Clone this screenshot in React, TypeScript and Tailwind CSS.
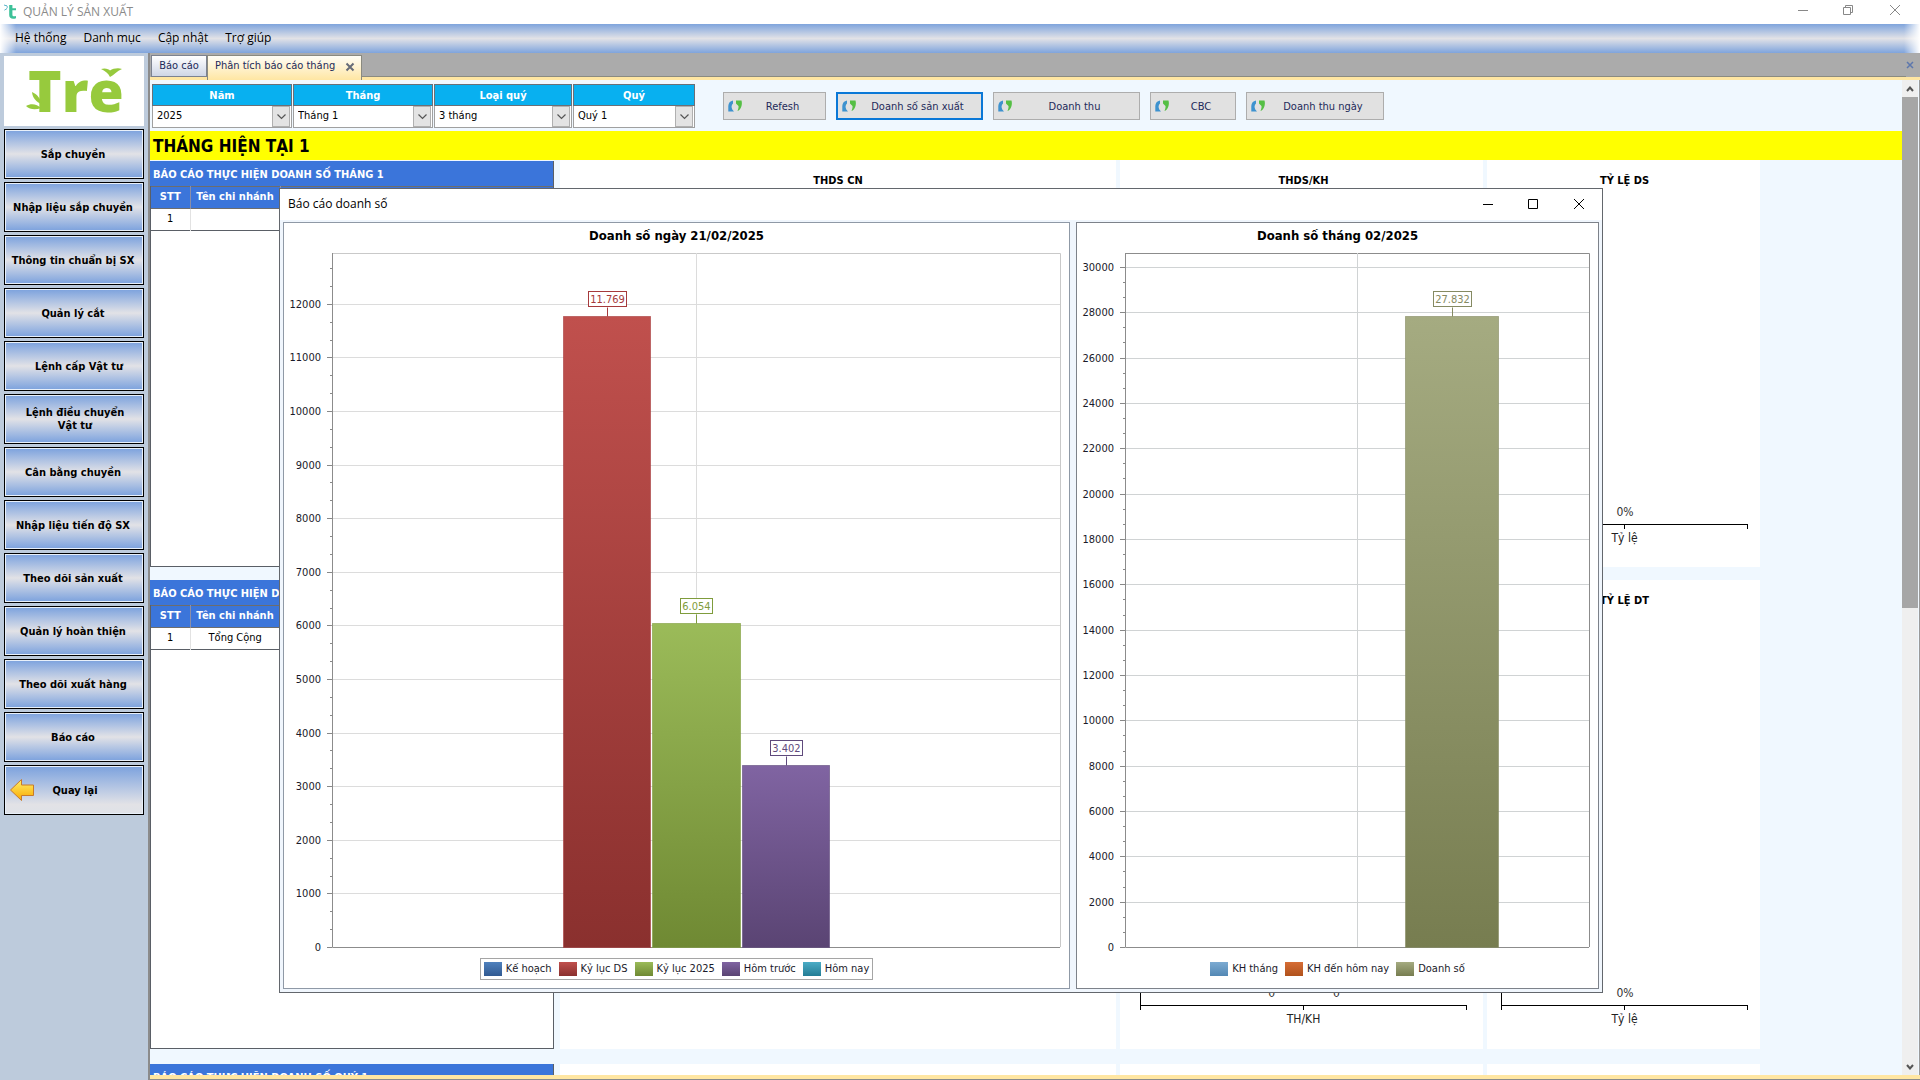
import React from "react";

const UI = "font-['DejaVu_Sans_Condensed','DejaVu_Sans',sans-serif]";
const SEGOE = "font-['Open_Sans','Noto_Sans',sans-serif]";

function TitleBar() {
  return (
    <header className={`flex h-6 shrink-0 items-center bg-white text-xs text-[#8a8a8a] ${SEGOE}`}>
      <svg className="ml-1 mr-1 h-4 w-[15px]" viewBox="0 0 15 16" aria-hidden="true">
        <path d="M0 1l2.5 0.8M0.4 6.2l2.6-1.6M2.2 1.4c1.4 0.6 1.4 2 0.6 3" stroke="#5bb5c9" strokeWidth="1" fill="none" />
        <path d="M5.2 1h3.2v3.2h3.6v2H8.4v4.6c0 1.6 1.6 1.9 3.6 1.2v2.2c-3.6 1.2-6.8 0.4-6.8-3.2z" fill="#3cc198" />
      </svg>
      <h1 className="pb-px">QUẢN LÝ SẢN XUẤT</h1>
      <div className="ml-auto flex items-center pb-1">
        <button aria-label="Thu nhỏ" className="flex w-[46px] justify-center">
          <svg width="10" height="10"><path d="M0 5.5h10" stroke="#888" /></svg>
        </button>
        <button aria-label="Khôi phục" className="flex w-11 justify-center">
          <svg width="10" height="10"><path d="M.5 2.5h7v7h-7zM2.500 2.500V.5h7v7h-2" stroke="#888" fill="none" /></svg>
        </button>
        <button aria-label="Đóng" className="flex w-[50px] justify-center">
          <svg width="10" height="10"><path d="M0 0l10 10M10 0L0 10" stroke="#888" fill="none" /></svg>
        </button>
      </div>
    </header>
  );
}

function MenuBar() {
  return (
    <nav className={`relative flex h-[29px] shrink-0 items-center gap-[17px] bg-linear-to-b from-[#7fa4dc] via-[#e2e2e6] to-[#7fa4dc] pb-0.5 pl-[15px] text-xs text-black ${SEGOE}`}>
      <div className="absolute inset-y-0 left-0 w-4 bg-linear-to-r from-white to-white/0" />
      <div className="absolute inset-y-0 right-0 w-4 bg-linear-to-l from-white to-white/0" />
      {["Hệ thống", "Danh mục", "Cập nhật", "Trợ giúp"].map((m) => (
        <button key={m} className="relative">{m}</button>
      ))}
    </nav>
  );
}

function Logo() {
  return (
    <div className="h-[70px] bg-white">
      <svg className="overflow-visible" width="140" height="70" viewBox="0 0 140 70" role="img" aria-label="Tre">
        <g fill="#97ca3d">
          <text x="24" y="56" fontSize="57" fontWeight="800" fontFamily="Open Sans, sans-serif">Tre</text>
          <path d="M97 13c4-1.400 8 0 9 1.600c3-2 8-3 12-1.600c-5 2-8 6-12 8c-2-4-5-6-9-8z" />
          <path d="M28 36c5 2 9 7 9.500 12c-5-2-9-6-9.500-12zM22 50c5-3 11-2 15 2c-5 2-11 2-15-2z" />
        </g>
      </svg>
    </div>
  );
}

function BackArrow() {
  return (
    <svg className="absolute left-1 top-3" width="26" height="24" viewBox="0 0 26 24" aria-hidden="true">
      <defs>
        <linearGradient id="arrow" x1="0" y1="0" x2="0" y2="1">
          <stop offset="0" stopColor="#fff06a" />
          <stop offset="1" stopColor="#f9a800" />
        </linearGradient>
      </defs>
      <path d="M1.500 12L12.500 1.500V7H24.500V17.500H12.500V22.500z" fill="url(#arrow)" stroke="#c87a2a" strokeLinejoin="round" />
    </svg>
  );
}

const sideItems: { label: React.ReactNode; pad?: string }[] = [
  { label: "Sắp chuyền" },
  { label: "Nhập liệu sắp chuyền" },
  { label: "Thông tin chuẩn bị SX" },
  { label: "Quản lý cắt" },
  { label: "Lệnh cấp Vật tư", pad: "pl-3" },
  { label: <>Lệnh điều chuyển<br />Vật tư</>, pad: "pl-1" },
  { label: "Cân bằng chuyền" },
  { label: "Nhập liệu tiến độ SX" },
  { label: "Theo dõi sản xuất" },
  { label: "Quản lý hoàn thiện" },
  { label: "Theo dõi xuất hàng" },
  { label: "Báo cáo" },
];

function Sidebar() {
  const base = "relative h-[50px] w-full whitespace-nowrap border border-black pr-0.5 text-center text-[11px] leading-[13px] font-bold text-black shadow-[inset_0_0_0_1px_#e8f0fa]";
  return (
    <aside className="flex w-[148px] shrink-0 flex-col gap-[3px] bg-[#bdcbdc] pl-1 pr-1 pt-[3px]">
      <Logo />
      {sideItems.map((s, i) => (
        <button key={i} className={`${base} bg-linear-to-b from-[#7ba1dd] via-[#e2e2e6] to-[#7ba1dd] ${s.pad ?? ""}`}>
          {s.label}
        </button>
      ))}
      <button className={`${base} bg-linear-to-b from-[#7ba1dd] via-[#e2e2e6] via-80% to-[#dfe2e8] pl-1`}>
        <BackArrow />
        Quay lại
      </button>
    </aside>
  );
}

function Tabs() {
  return (
    <div className="flex h-[27px] shrink-0 items-start border-b-[3px] border-[#ffe6a2] bg-[#ababab] pl-px text-[11px] text-[#1e2a5a]">
      <button className="mt-0.5 h-[22px] w-14 border border-[#7c8290] bg-linear-to-b from-white to-[#cfd6e6]">Báo cáo</button>
      <div className="mt-0.5 flex h-[25px] w-[155px] items-center justify-between border-x border-t border-[#8a8a80] bg-linear-to-b from-[#fffdf6] to-[#ffe6a2] pb-[3px] pl-[7px] pr-1.5">
        <button>Phân tích báo cáo tháng</button>
        <button aria-label="Đóng thẻ">
          <svg width="10" height="10"><path d="M1.500 1.500l7 7M8.500 1.500l-7 7" stroke="#666b78" strokeWidth="2" /></svg>
        </button>
      </div>
      <div className="h-6 flex-1 border-b border-[#8b8b80]" />
      <button aria-label="Đóng tất cả" className="mr-1.5 mt-2">
        <svg width="8" height="8"><path d="M1 1l6 6M7 1L1 7" stroke="#5d77ad" strokeWidth="1.500" /></svg>
      </button>
    </div>
  );
}

const filters = [
  { id: "nam", label: "Năm", value: "2025", w: "w-[141px]" },
  { id: "thang", label: "Tháng", value: "Tháng 1", w: "w-[141px]" },
  { id: "loai", label: "Loại quý", value: "3 tháng", w: "w-[139px]" },
  { id: "quy", label: "Quý", value: "Quý 1", w: "w-[123px]" },
];

const actions = [
  { label: "Refesh", w: "w-[103px]" },
  { label: "Doanh số sản xuất", w: "w-[147px]", active: true },
  { label: "Doanh thu", w: "w-[147px]" },
  { label: "CBC", w: "w-[86px]" },
  { label: "Doanh thu ngày", w: "w-[138px]" },
];

function Toolbar() {
  return (
    <div className="flex h-[51px] shrink-0 items-start pl-0.5 pt-1">
      {filters.map((f) => (
        <div key={f.id} className={`${f.w} pr-px`}>
          <label htmlFor={f.id} className="flex h-[22px] items-center justify-center border border-[#6b6f76] bg-[#08b0f0] pt-[3px] text-[11px] font-bold text-white">
            {f.label}
          </label>
          <div className="relative h-[22px] border-x border-b border-[#a0a0a0] bg-white pr-px">
            <select id={f.id} defaultValue={f.value} className="block h-5 w-full appearance-none pl-1 text-[11px] leading-5 text-black">
              <option>{f.value}</option>
            </select>
            <span className="pointer-events-none absolute right-px top-0 flex h-[21px] w-[18px] items-center justify-center border border-[#b0b0b0] bg-[#e3e3e3]">
              <svg width="9" height="6"><path d="M.5 .5l4 4l4-4" stroke="#555" fill="none" strokeWidth="1.200" /></svg>
            </span>
          </div>
        </div>
      ))}
      <div className="ml-[27px] mt-2 flex gap-2.5">
        {actions.map((a) => (
          <button
            key={a.label}
            className={`relative h-7 ${a.w} bg-[#e1e1e1] pl-4 pt-0.5 text-[11px] text-[#1e2a5a] ${a.active ? "border-2 border-[#0a78d7]" : "border border-[#adadad]"}`}
          >
            <svg className="absolute left-1 top-1/2 -translate-y-1/2" width="15" height="12" viewBox="0 0 15 12" aria-hidden="true">
              <path d="M5 .5C2 1 .5 3 .3 6v5.500H6L4.300 9.500C3.200 7 3.300 5 5 3.500z" fill="#3d92cf" />
              <path d="M8 .5h5.500c.5 2 .5 3.500 0 5.500c-.8 3-2.500 4.500-4 5c.8-2 1.200-3.500 1-5L8 3.500z" fill="#55bf45" />
            </svg>
            {a.label}
          </button>
        ))}
      </div>
    </div>
  );
}

function ReportTable({ title, rows }: { title: string; rows: string[][] }) {
  return (
    <section className="mr-0.5 flex flex-col overflow-hidden border-b border-r border-[#5a5f66] bg-white">
      <h3 className="flex h-[25px] shrink-0 items-center bg-[#3b75da] pl-[3px] pt-[3px] text-[11px] font-bold whitespace-nowrap text-white">{title}</h3>
      <div className="flex-1 border-l border-[#5a5f66]">
        <table className="w-full table-fixed border-collapse text-center text-[11px]">
          <colgroup>
            <col className="w-[39px]" />
            <col className="w-[90px]" />
            <col />
          </colgroup>
          <thead>
            <tr className="h-[22px] border-y border-[#6d6d6d] bg-[#3b75da] text-white">
              <th className="border-r border-[#8a8fa8]">STT</th>
              <th className="border-r border-[#8a8fa8]">Tên chi nhánh</th>
              <th />
            </tr>
          </thead>
          <tbody>
            {rows.map((r, i) => (
              <tr key={i} className="h-[22px] border-b border-[#5a5f66]">
                <td className="border-r border-[#e2e2e2]">{r[0]}</td>
                <td>{r[1]}</td>
                <td />
              </tr>
            ))}
          </tbody>
        </table>
      </div>
    </section>
  );
}

function ChartCard({ title, children, pad = "" }: { title: string; children?: React.ReactNode; pad?: string }) {
  return (
    <section className={`flex flex-col bg-white ${pad}`}>
      <h3 className="pt-[13px] text-center text-[11px] leading-4 font-bold text-black">{title}</h3>
      {children}
    </section>
  );
}

function MiniChart({ name, values, foot }: { name: string; values: string[]; foot: string }) {
  return (
    <>
      <div className="mt-2 flex flex-1 items-end justify-center gap-[58px] border-b border-l border-black pb-1 text-xs leading-4 text-[#333]">
        {values.map((v, i) => (
          <span key={i}>{v}</span>
        ))}
      </div>
      <div className={`flex flex-col items-center ${foot}`}>
        <div className="flex w-full justify-between">
          <span className="h-1 w-px bg-black" />
          <span className="h-1 w-px bg-black" />
          <span className="h-1 w-px bg-black" />
        </div>
        <span className="text-xs leading-[18px] text-[#222]">{name}</span>
      </div>
    </>
  );
}

function Dashboard() {
  const row = "grid shrink-0 grid-cols-[406px_556px_363px_273px] gap-x-1";
  return (
    <>
      <h2 className="flex h-[29px] shrink-0 items-center bg-[#ffff00] pl-[3px] pt-0.5 text-[17px] font-bold text-black">THÁNG HIỆN TẠI 1</h2>
      <div className={`${row} h-[407px]`}>
        <div className="grid pt-px">
          <ReportTable title="BÁO CÁO THỰC HIỆN DOANH SỐ THÁNG 1" rows={[["1", ""]]} />
        </div>
        <ChartCard title="THDS CN" />
        <ChartCard title="THDS/KH" pad="pl-5 pr-4">
          <MiniChart name="TH/KH" values={["0", "0"]} foot="h-[42px]" />
        </ChartCard>
        <ChartCard title="TỶ LỆ DS" pad="pl-3.5 pr-3">
          <MiniChart name="Tỷ lệ" values={["0%"]} foot="h-[42px]" />
        </ChartCard>
      </div>
      <div className={`${row} mt-[13px] h-[469px]`}>
        <ReportTable title="BÁO CÁO THỰC HIỆN DOANH THU THÁNG 1" rows={[["1", "Tổng Cộng"]]} />
        <ChartCard title="THDT CN" />
        <ChartCard title="THDT/KH" pad="pl-5 pr-4">
          <MiniChart name="TH/KH" values={["0", "0"]} foot="h-[43px]" />
        </ChartCard>
        <ChartCard title="TỶ LỆ DT" pad="pl-3.5 pr-3">
          <MiniChart name="Tỷ lệ" values={["0%"]} foot="h-[43px]" />
        </ChartCard>
      </div>
      <div className={`${row} mt-[15px] h-[407px]`}>
        <ReportTable title="BÁO CÁO THỰC HIỆN DOANH SỐ QUÝ 1" rows={[]} />
        <div className="bg-white" />
        <div className="bg-white" />
        <div className="bg-white" />
      </div>
    </>
  );
}

type Bar = { x: number; w: number; value: number; label: string; from: string; to: string; line: string };

type ChartProps = {
  id: string;
  title: string;
  width: number;
  left: number;
  right: number;
  mid: number;
  unit: number;
  step: number;
  max: number;
  bars: Bar[];
  frame: string;
  grid: string;
};

const TOP = 30;
const BASE = 724;

function BarChart(p: ChartProps) {
  const y = (v: number) => Math.round(BASE - v * p.unit) + 0.5;
  const majors = Array.from({ length: p.max / p.step + 1 }, (_, i) => i * p.step);
  const minors = majors.flatMap((m) => [m + p.step / 3, m + (2 * p.step) / 3]).filter((v) => y(v) > TOP);
  return (
    <svg width={p.width} height="734" viewBox={`0 0 ${p.width} 734`} role="img" aria-label={p.title} fontSize="11">
      <defs>
        {p.bars.map((b, i) => (
          <linearGradient key={i} id={`${p.id}${i}`} x1="0" y1="0" x2="0" y2="1">
            <stop offset="0" stopColor={b.from} />
            <stop offset="1" stopColor={b.to} />
          </linearGradient>
        ))}
      </defs>
      <text x={p.width / 2} y="17" textAnchor="middle" fontSize="13" fontWeight="700">{p.title}</text>
      <path d={`M${p.left} ${TOP + 0.5}H${p.right + 0.5}V${BASE}`} stroke={p.frame} fill="none" />
      <path d={`M${p.mid + 0.5} ${TOP}V${BASE}`} stroke={p.grid} />
      {majors.map((m) => (
        <g key={m}>
          {m > 0 && <path d={`M${p.left} ${y(m)}H${p.right}`} stroke={p.grid} />}
          <path d={`M${p.left - 5} ${y(m)}H${p.left}`} stroke="#888" />
          <text x={p.left - 11} y={y(m) + 3.5} textAnchor="end" fill="#1a1a2a">{m}</text>
        </g>
      ))}
      {minors.map((m) => (
        <path key={m} d={`M${p.left - 2} ${y(m)}H${p.left}`} stroke="#888" />
      ))}
      <path d={`M${p.left + 0.5} ${TOP}V${BASE + 0.5}H${p.right}`} stroke="#8c8c8c" fill="none" />
      {p.bars.map((b, i) => {
        const top = y(b.value);
        const cx = b.x + Math.floor(b.w / 2) + 0.5;
        const lw = b.label.length > 5 ? 38 : 32;
        return (
          <g key={i}>
            <rect x={b.x + 0.5} y={top} width={b.w - 1} height={BASE + 0.5 - top} fill={`url(#${p.id}${i})`} stroke={b.line} strokeOpacity="0.6" />
            <path d={`M${cx} ${top}V${top - 9}`} stroke={b.line} />
            <rect x={cx - lw / 2} y={top - 25} width={lw} height="15" fill="#fff" stroke={b.line} />
            <text x={cx} y={top - 13.5} textAnchor="middle" fill={b.line}>{b.label}</text>
          </g>
        );
      })}
    </svg>
  );
}

function Legend({ items, className = "" }: { items: [string, string][]; className?: string }) {
  return (
    <ul className={`mx-auto mt-px flex h-[22px] items-center gap-[7px] px-[3px] text-[11px] text-[#1a1a2a] ${className}`}>
      {items.map(([name, color]) => (
        <li key={name} className="flex items-center gap-1">
          <span className={`h-3.5 w-[18px] bg-linear-to-b ${color}`} />
          {name}
        </li>
      ))}
    </ul>
  );
}

function ReportDialog() {
  return (
    <div role="dialog" aria-label="Báo cáo doanh số" className="absolute left-[279px] top-[188px] flex h-[805px] w-[1324px] flex-col border border-[#63676d] bg-[#f0f6fd]">
      <div className={`flex h-[31px] shrink-0 items-center bg-white pb-0.5 pl-2 text-xs text-black ${SEGOE}`}>
        <span>Báo cáo doanh số</span>
        <div className="ml-auto flex items-center">
          <button aria-label="Thu nhỏ" className="flex w-[45px] justify-center">
            <svg width="10" height="10"><path d="M0 5.500h10" stroke="#000" /></svg>
          </button>
          <button aria-label="Phóng to" className="flex w-[45px] justify-center">
            <svg width="10" height="10"><path d="M.5 .5h9v9h-9z" stroke="#000" fill="none" /></svg>
          </button>
          <button aria-label="Đóng" className="flex w-[47px] justify-center">
            <svg width="10" height="10"><path d="M0 0l10 10M10 0L0 10" stroke="#000" fill="none" /></svg>
          </button>
        </div>
      </div>
      <div className="mt-0.5 flex min-h-0 flex-1 gap-1.5 px-[3px] pb-[3px]">
        <section className="flex w-[787px] flex-col border border-[#8f99a6] bg-white">
          <BarChart
            id="d"
            title="Doanh số ngày 21/02/2025"
            width={785}
            left={48}
            right={776}
            mid={412}
            unit={0.0536}
            step={1000}
            max={12000}
            frame="#c9c9c9"
            grid="#dcdcdc"
            bars={[
              { x: 279, w: 88, value: 11769, label: "11.769", from: "#c0504d", to: "#8a302e", line: "#a63a3c" },
              { x: 368, w: 89, value: 6054, label: "6.054", from: "#9bbb59", to: "#6f8933", line: "#7f9c3c" },
              { x: 458, w: 88, value: 3402, label: "3.402", from: "#8064a2", to: "#5a4473", line: "#5f4a7c" },
            ]}
          />
          <Legend
            className="border border-[#a5a5a5]"
            items={[
              ["Kế hoạch", "from-[#4f81bd] to-[#315a92]"],
              ["Kỷ lục DS", "from-[#c0504d] to-[#8a302e]"],
              ["Kỷ lục 2025", "from-[#9bbb59] to-[#6f8933]"],
              ["Hôm trước", "from-[#8064a2] to-[#5a4473]"],
              ["Hôm nay", "from-[#4bacc6] to-[#237d95]"],
            ]}
          />
        </section>
        <section className="flex min-w-0 flex-1 flex-col border border-[#7d828a] bg-white">
          <BarChart
            id="m"
            title="Doanh số tháng 02/2025"
            width={521}
            left={48}
            right={512}
            mid={280}
            unit={0.02267}
            step={2000}
            max={30000}
            frame="#8c8c8c"
            grid="#d0d3d4"
            bars={[{ x: 328, w: 94, value: 27832, label: "27.832", from: "#a5ab81", to: "#777d50", line: "#858a62" }]}
          />
          <Legend
            items={[
              ["KH tháng", "from-[#7cabd2] to-[#5388b4]"],
              ["KH đến hôm nay", "from-[#d66d35] to-[#b0521c]"],
              ["Doanh số", "from-[#a5ab81] to-[#777d50]"],
            ]}
          />
        </section>
      </div>
    </div>
  );
}

function ScrollRail() {
  return (
    <div className="mr-px flex w-4 shrink-0 flex-col bg-[#efefef]" aria-hidden="true">
      <div className="flex h-[17px] items-center justify-center">
        <svg width="8" height="6"><path d="M1 5l3-3.500l3 3.500" stroke="#555" strokeWidth="2" fill="none" /></svg>
      </div>
      <div className="flex-[510] bg-[#a6a6a6]" />
      <div className="flex-[450]" />
      <div className="flex h-[17px] items-center justify-center">
        <svg width="8" height="6"><path d="M1 1l3 3.500l3-3.500" stroke="#555" strokeWidth="2" fill="none" /></svg>
      </div>
    </div>
  );
}

export default function App() {
  return (
    <div className={`relative flex h-screen flex-col overflow-hidden bg-white ${UI}`}>
      <TitleBar />
      <MenuBar />
      <div className="flex min-h-0 flex-1">
        <Sidebar />
        <main className="flex min-w-0 flex-1 flex-col border-b border-l-2 border-[#8b8b8b] bg-[#f0f8ff]">
          <Tabs />
          <div className="flex min-h-0 flex-1 border-r border-[#9a9a9a]">
            <div className="flex min-w-0 flex-1 flex-col overflow-hidden">
              <Toolbar />
              <Dashboard />
            </div>
            <ScrollRail />
          </div>
          <div className="h-1 shrink-0 bg-[#ffe6a2]" />
        </main>
      </div>
      <ReportDialog />
    </div>
  );
}
